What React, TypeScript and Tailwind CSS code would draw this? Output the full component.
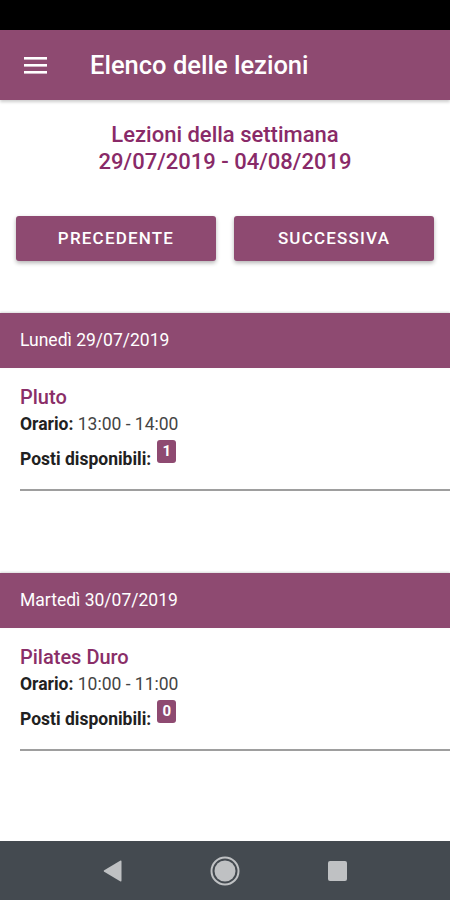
const lessons = [
  { day: "Lunedì 29/07/2019", name: "Pluto", time: "13:00 - 14:00", seats: 1 },
  { day: "Martedì 30/07/2019", name: "Pilates Duro", time: "10:00 - 11:00", seats: 0 },
]

const DaySection = ({ day, name, time, seats }: { day: string; name: string; time: string; seats: number }) => {
  return (
    <div className="mb-[82px]">
      <div className="h-[55px] bg-[#8e4a71] flex items-center px-5 text-white text-[17.5px] shadow-[0_-1px_2px_rgba(0,0,0,0.15)]">
        {day}
      </div>
      <div className="pl-5 pt-[17px]">
        <p className="text-[#8a2e68] text-[20px] font-medium leading-[24px]">{name}</p>
        <p className="text-[17.5px] leading-[22px] mt-[4px] text-[#212121]">
          <span className="font-bold">Orario:</span> <span className="text-[#444]">{time}</span>
        </p>
        <div className="flex items-start mt-[5px] h-[30px]">
          <span className="mt-[8px] text-[17.5px] font-bold text-[#212121] leading-[22px]">Posti disponibili:</span>
          <span className="ml-[6px] w-[19px] h-[23px] rounded-[3px] bg-[#8e4a71] text-white text-[15px] leading-none font-bold flex items-center justify-center pb-[1px]">
            {seats}
          </span>
        </div>
        <div className="mt-[19px] h-[2px] bg-[#9e9e9e]"></div>
      </div>
    </div>
  )
}

export default function App() {
  return (
    <div className="w-[450px] h-[900px] flex flex-col bg-white font-['Roboto',sans-serif]">
      <div className="h-[30px] bg-black"></div>
      <div className="h-[70px] bg-[#8e4a71] flex items-center shadow-[0_2px_3px_rgba(0,0,0,0.2)] z-10">
        <svg className="ml-[24px]" width="23" height="17" viewBox="0 0 23 17">
          <rect x="0" y="0" width="23" height="2.6" fill="white" />
          <rect x="0" y="7" width="23" height="2.6" fill="white" />
          <rect x="0" y="14" width="23" height="2.6" fill="white" />
        </svg>
        <h1 className="ml-[43px] text-white text-[25.5px] font-medium">Elenco delle lezioni</h1>
      </div>
      <div className="flex-1 overflow-hidden">
        <div className="pt-[21px] text-center text-[#892a68] text-[22px] font-medium leading-[27px]">
          <p>Lezioni della settimana</p>
          <p>29/07/2019 - 04/08/2019</p>
        </div>
        <div className="flex gap-[18px] px-4 mt-[41px]">
          <button className="flex-1 h-[45px] rounded-[3px] bg-[#8e4a71] text-white text-[17px] font-medium tracking-[1.2px] shadow-[0_2px_4px_rgba(0,0,0,0.3)]">
            PRECEDENTE
          </button>
          <button className="flex-1 h-[45px] rounded-[3px] bg-[#8e4a71] text-white text-[17px] font-medium tracking-[1.2px] shadow-[0_2px_4px_rgba(0,0,0,0.3)]">
            SUCCESSIVA
          </button>
        </div>
        <div className="mt-[52px]">
          {lessons.map((l) => (
            <DaySection key={l.day} {...l} />
          ))}
        </div>
      </div>
      <div className="h-[59px] bg-[#444a50] flex items-center justify-center">
        <div className="flex items-center gap-[88px]">
          <svg width="19" height="22" viewBox="0 0 19 22">
            <path d="M18.5 1.5 L18.5 20.5 Q18.5 22 17.1 21.2 L1.2 11.8 Q0 11 1.2 10.2 L17.1 0.8 Q18.5 0 18.5 1.5 Z" fill="#bfc1c3" />
          </svg>
          <svg width="30" height="30" viewBox="0 0 30 30">
            <circle cx="15" cy="15" r="13.5" fill="none" stroke="#bfc1c3" strokeWidth="2" />
            <circle cx="15" cy="15" r="10.5" fill="#bfc1c3" />
          </svg>
          <svg width="19" height="20" viewBox="0 0 19 20">
            <rect x="0" y="0" width="19" height="20" rx="2" fill="#bfc1c3" />
          </svg>
        </div>
      </div>
    </div>
  )
}
